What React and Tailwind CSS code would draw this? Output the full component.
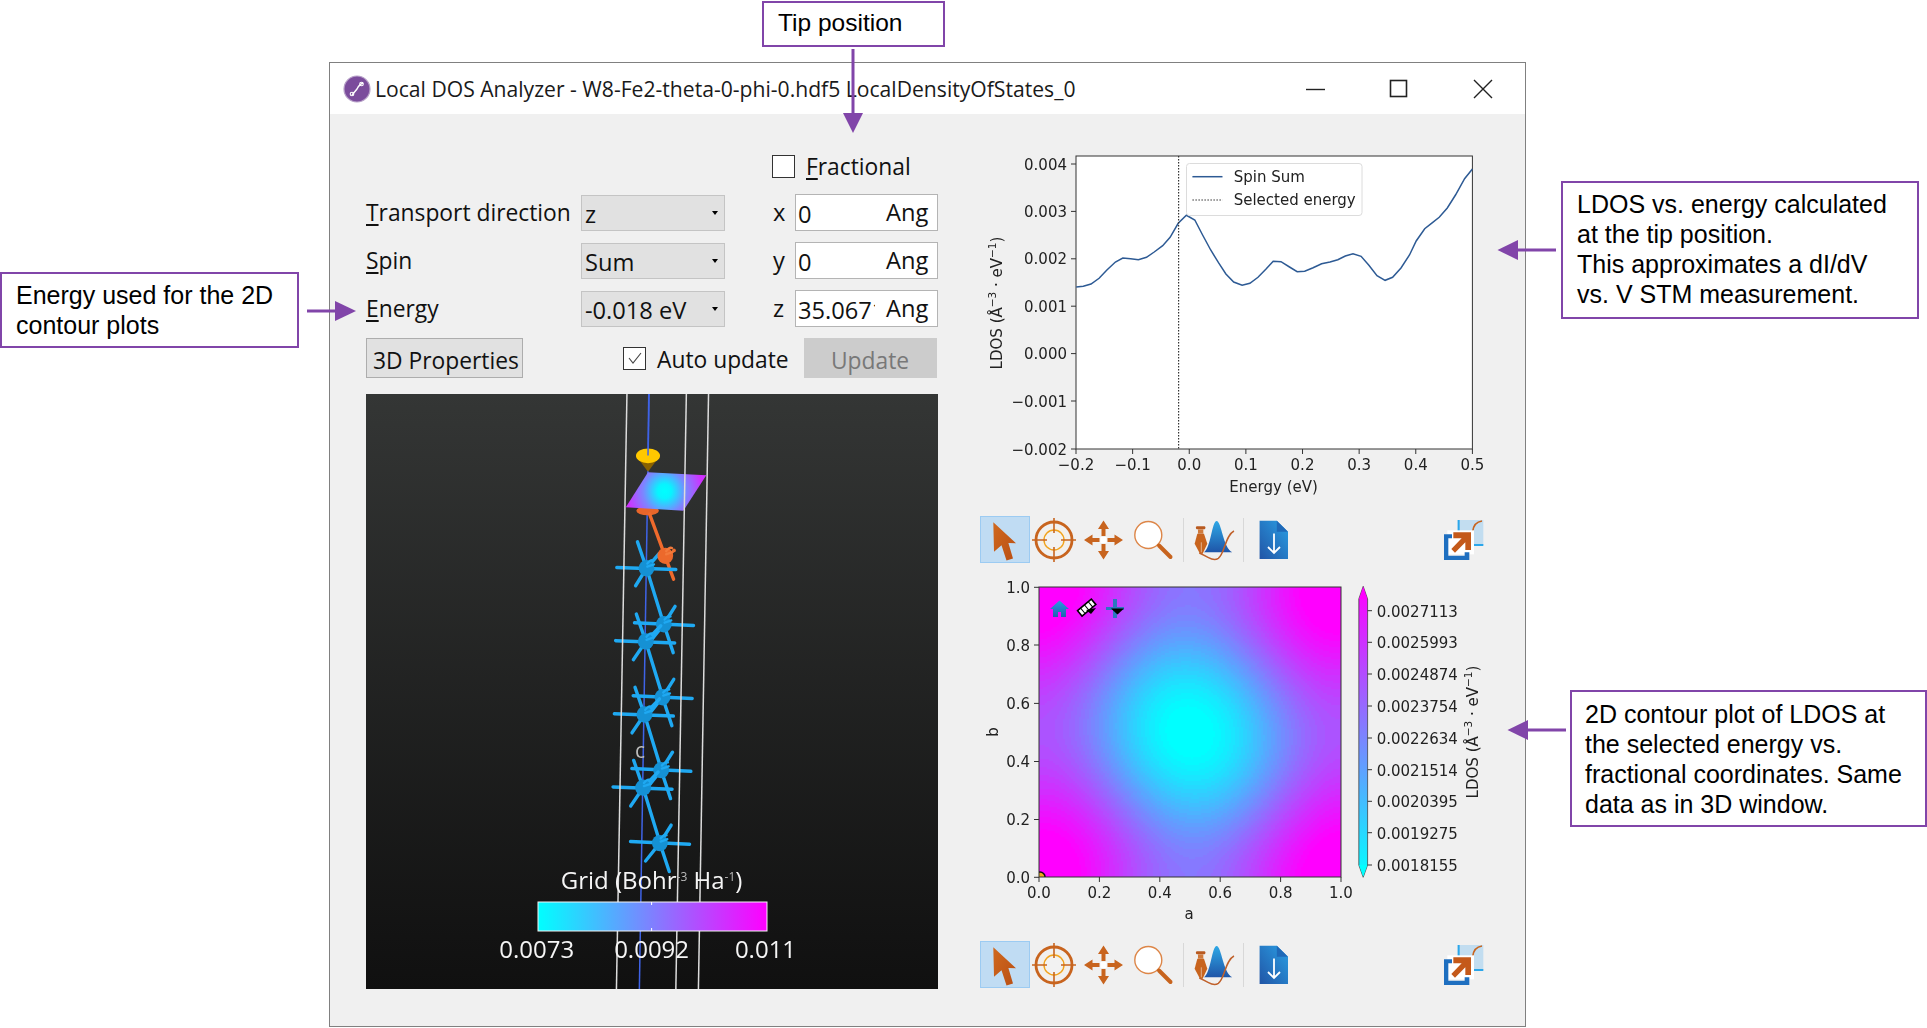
import React, { useMemo } from "react";

const PURPLE = "#8145a9";
const SANS = "[font-family:'Liberation_Sans',Arial,sans-serif]";
const UI = "[font-family:'Open_Sans',sans-serif]";
const PLOT = "[font-family:'DejaVu_Sans',sans-serif]";

function Squeezed({ children, className = "" }) {
  return <span className={"inline-block origin-left scale-x-[.95] translate-y-[2px] whitespace-nowrap " + className}>{children}</span>;
}

function Digits({ children }) {
  return (
    <span className="inline-block origin-left translate-y-[.5px] scale-x-[.985] whitespace-nowrap text-[24px] leading-none text-[#111]">
      {children}
    </span>
  );
}

function Mnemonic({ first, rest }) {
  return (
    <span className="inline-block origin-left translate-y-[1px] scale-x-[.95] whitespace-nowrap text-[24px] leading-none text-[#111]">
      <span className="underline underline-offset-[3px] decoration-[1.5px]">{first}</span>
      {rest}
    </span>
  );
}

function Combo({ value }) {
  return (
    <div className="flex h-[36px] w-[144px] items-center border border-[#c4c4c4] bg-[#e1e1e1] pl-[3px] pr-[6px]">
      <Digits>{value}</Digits>
      <div className="ml-auto h-0 w-0 border-x-[3px] border-t-[4px] border-x-transparent border-t-black" />
    </div>
  );
}

function Field({ value }) {
  return (
    <div className="flex h-[37px] w-[143px] items-center border border-[#b4b4b4] bg-white pl-[2px]">
      <div className="flex h-[35px] w-[77px] items-center overflow-hidden">
        <Digits>{value}</Digits>
      </div>
      <div className="ml-[11px]">
        <Digits>Ang</Digits>
      </div>
    </div>
  );
}

function FormRow({ first, rest, value, axis, field }) {
  return (
    <div className="mb-[11px] flex h-[37px] items-center">
      <div className="w-[215px]">
        <Mnemonic first={first} rest={rest} />
      </div>
      <Combo value={value} />
      <div className="w-[70px] pl-[48px]">
        <Digits>{axis}</Digits>
      </div>
      <Field value={field} />
    </div>
  );
}

function Controls() {
  return (
    <div className={UI}>
      <div className="mb-[16px] mt-[41px] flex h-[23px] items-center pl-[406px]">
        <div className="h-[23px] w-[23px] border-[1.5px] border-[#333] bg-white" />
        <div className="ml-[11px]">
          <Mnemonic first="F" rest="ractional" />
        </div>
      </div>
      <FormRow first="T" rest="ransport direction" value="z" axis="x" field="0" />
      <FormRow first="S" rest="pin" value="Sum" axis="y" field="0" />
      <FormRow first="E" rest="nergy" value="-0.018 eV" axis="z" field="35.0671" />
      <div className="mt-[1px] flex h-[40px] items-center">
        <button className="flex h-[40px] w-[157px] items-center border border-[#adadad] bg-[#e1e1e1] pl-[6px]">
          <Squeezed className="text-[24px] leading-none text-[#111]">3D Properties</Squeezed>
        </button>
        <div className="ml-[100px] flex h-[23px] w-[23px] items-center justify-center border-[1.5px] border-[#333] bg-white">
          <svg width="16" height="14" viewBox="0 0 16 14">
            <path d="M2 7 L6 12 L14 2" fill="none" stroke="#444" strokeWidth="1.1" />
          </svg>
        </div>
        <div className="ml-[11px] w-[147px]">
          <Squeezed className="text-[24px] leading-none text-[#111]">Auto update</Squeezed>
        </div>
        <button className="flex h-[40px] w-[133px] items-center bg-[#cccccc] pl-[27px]">
          <Squeezed className="text-[24px] leading-none text-[#787878]">Update</Squeezed>
        </button>
      </div>
    </div>
  );
}

const BLUE = "#1fa9f2";

function Atom({ cx, cy, fill, glint }) {
  return (
    <g>
      <circle cx={cx} cy={cy} r="21" fill={fill} />
      <path d={`M${cx + 2} ${cy - 12} C${cx + 10} ${cy - 22} ${cx + 14} ${cy - 22} ${cx + 18} ${cy - 20} M${cx + 2} ${cy - 4} L${cx + 20} ${cy - 10}`} fill="none" stroke={glint} strokeWidth="6" strokeLinecap="round" />
    </g>
  );
}

function UpperAtom({ dx, dy }) {
  return (
    <g transform={`translate(${dx} ${dy})`}>
      <g stroke={BLUE} strokeWidth="9" strokeLinecap="round">
        <line x1="730" y1="600" x2="887" y2="607" />
        <line x1="808" y1="604" x2="833" y2="677" />
        <line x1="808" y1="604" x2="838" y2="558" />
        <line x1="808" y1="604" x2="770" y2="650" />
      </g>
      <Atom cx={808} cy={604} fill="#1591d4" glint={BLUE} />
    </g>
  );
}

function LowerAtom({ dx, dy }) {
  return (
    <g transform={`translate(${dx} ${dy})`}>
      <g stroke={BLUE} strokeWidth="9" strokeLinecap="round">
        <line x1="680" y1="646" x2="837" y2="652" />
        <line x1="735" y1="578" x2="760" y2="648" />
        <line x1="760" y1="648" x2="727" y2="695" />
        <line x1="760" y1="648" x2="800" y2="608" />
        <line x1="760" y1="648" x2="805" y2="790" />
      </g>
      <Atom cx={760} cy={648} fill="#1591d4" glint={BLUE} />
    </g>
  );
}

function View3D() {
  return (
    <div className="mt-[16px] h-[595px] w-[572px] bg-linear-to-b from-[#343635] to-[#101010]">
      <svg width="572" height="595" viewBox="0 0 572 595" className="block blur-[.35px]">
        <defs>
          <radialGradient id="plane" gradientUnits="userSpaceOnUse" cx="810" cy="262" r="102">
            <stop offset="0" stopColor="#00ffff" />
            <stop offset="0.18" stopColor="#08f4ff" />
            <stop offset="0.55" stopColor="#7a88ff" />
            <stop offset="1" stopColor="#d030ff" />
          </radialGradient>
          <linearGradient id="bar3d" x1="0" x2="1" y1="0" y2="0">
            <stop offset="0" stopColor="#00ffff" />
            <stop offset="1" stopColor="#ff00ff" />
          </linearGradient>
        </defs>
        <g transform="scale(.376 .389) translate(-16 -12)">
          <line x1="769" y1="12" x2="743" y2="1545" stroke="#3f63e6" strokeWidth="4" />
          <g stroke="#f06a2c" strokeLinecap="round">
            <ellipse cx="765" cy="312" rx="30" ry="12" fill="#e8662a" stroke="none" />
            <line x1="770" y1="320" x2="834" y2="488" strokeWidth="9" />
          </g>
          <g stroke={BLUE} strokeWidth="9" strokeLinecap="round">
            <line x1="683" y1="458" x2="840" y2="463" />
            <line x1="738" y1="392" x2="762" y2="460" />
            <line x1="762" y1="460" x2="733" y2="505" />
            <line x1="762" y1="460" x2="796" y2="422" />
            <line x1="762" y1="460" x2="808" y2="604" />
          </g>
          <Atom cx={812} cy={428} fill="#ec692c" glint="#f27a3c" />
          <circle cx="835" cy="414" r="5" fill="#ee7030" />
          <Atom cx={762} cy={460} fill="#1591d4" glint={BLUE} />
          {[0, 1, 2].map((i) => (
            <g key={i}>
              <UpperAtom dx={-3.5 * i} dy={187.5 * i} />
              <LowerAtom dx={-3.5 * i} dy={188 * i} />
            </g>
          ))}
          <UpperAtom dx={-10.5} dy={562.5} />
          <polygon points="734,171 798,171 766,212" fill="#8a6200" />
          <ellipse cx="766" cy="171" rx="32" ry="19" fill="#ffc800" />
          <line x1="768" y1="12" x2="766" y2="170" stroke="#3f63e6" strokeWidth="4" />
          <polygon points="766,213 921,221 860,312 707,303" fill="url(#plane)" />
          <g stroke="#dcdcdc" strokeWidth="4">
            <line x1="710" y1="12" x2="682" y2="1545" />
            <line x1="868" y1="12" x2="840" y2="1545" />
            <line x1="927" y1="12" x2="900" y2="1545" />
          </g>
        </g>
        <rect x="172" y="508" width="229" height="29" fill="url(#bar3d)" stroke="#f4f4f4" strokeWidth="1" />
        <line x1="285.6" y1="508" x2="285.6" y2="511" stroke="#fff" />
        <line x1="285.6" y1="534" x2="285.6" y2="537" stroke="#fff" />
        <g className={UI} fill="#f5f5f5">
          <text x="269" y="364" className="text-[21px]" fill="#bdbdbd">c</text>
          <text x="285.6" y="495" textAnchor="middle" className="text-[24px]">
            Grid (Bohr<tspan dy="-8" className="text-[12px]" fill="#bbb">-3</tspan>
            <tspan dy="8"> Ha</tspan>
            <tspan dy="-8" className="text-[12px]" fill="#bbb">-1</tspan>
            <tspan dy="8">)</tspan>
          </text>
          <text x="170.8" y="564" textAnchor="middle" className="text-[24px]">0.0073</text>
          <text x="285.6" y="564" textAnchor="middle" className="text-[24px]">0.0092</text>
          <text x="399.5" y="564" textAnchor="middle" className="text-[24px]">0.011</text>
        </g>
      </svg>
    </div>
  );
}

const CURVE = [
  [314,441],[335,439],[358,432],[382,415],[405,390],[430,366],[452,354],[475,356],[498,359],[522,352],
  [545,336],[570,317],[592,292],[616,250],[640,226],[665,240],[688,285],[712,330],[735,368],[757,402],
  [780,426],[805,436],[828,430],[852,412],[875,388],[897,364],[920,365],[945,381],[968,395],[990,394],
  [1015,383],[1040,371],[1065,366],[1088,359],[1110,348],[1133,341],[1157,349],[1180,376],[1204,407],[1228,421],
  [1250,412],[1275,384],[1300,345],[1320,303],[1345,266],[1365,250],[1388,232],[1412,204],[1436,165],[1463,116],[1486,87],
];

function LdosLabel({ x, y }) {
  return (
    <text transform={`rotate(-90 ${x} ${y})`} x={x} y={y} textAnchor="middle" className="text-[15px]">
      LDOS (Å<tspan dy="-6" className="text-[10.5px]">−3</tspan>
      <tspan dy="6"> · eV</tspan>
      <tspan dy="-6" className="text-[10.5px]">−1</tspan>
      <tspan dy="6">)</tspan>
    </text>
  );
}

function LineChart() {
  const points = CURVE.map(([x, y]) => `${(970 + x / 2.958).toFixed(1)},${(140 + y / 3).toFixed(1)}`).join(" ");
  const yTicks = [
    ["0.004", 164], ["0.003", 211.4], ["0.002", 258.8], ["0.001", 306.2],
    ["0.000", 353.6], ["−0.001", 401], ["−0.002", 449],
  ];
  const xTicks = ["−0.2", "−0.1", "0.0", "0.1", "0.2", "0.3", "0.4", "0.5"];
  return (
    <svg width="530" height="370" viewBox="970 140 530 370" className={"block blur-[.4px] " + PLOT}>
      <rect x="1076" y="156" width="396.4" height="293" fill="#fff" stroke="#333" strokeWidth="1" />
      <polyline points={points} fill="none" stroke="#2d5a94" strokeWidth="1.5" />
      <line x1="1178.6" y1="156" x2="1178.6" y2="449" stroke="#333" strokeWidth="1.2" strokeDasharray="1.5 1.5" />
      <rect x="1186.5" y="163.5" width="175.5" height="52" rx="3" fill="#fff" fillOpacity=".9" stroke="#dcdcdc" />
      <line x1="1192.4" y1="176.7" x2="1222.5" y2="176.7" stroke="#2d5a94" strokeWidth="1.5" />
      <line x1="1192.4" y1="200" x2="1222.5" y2="200" stroke="#333" strokeWidth="1.2" strokeDasharray="1.5 1.5" />
      <g fill="#222" className="text-[15px]">
        <text x="1233.7" y="182">Spin Sum</text>
        <text x="1233.7" y="205">Selected energy</text>
        {yTicks.map(([t, y]) => (
          <g key={t}>
            <line x1="1071" y1={y} x2="1076" y2={y} stroke="#333" />
            <text x="1067" y={y + 5.5} textAnchor="end">{t}</text>
          </g>
        ))}
        {xTicks.map((t, i) => {
          const x = 1076 + i * 56.63;
          return (
            <g key={t}>
              <line x1={x} y1="449" x2={x} y2="454" stroke="#333" />
              <text x={x} y="470" textAnchor="middle">{t}</text>
            </g>
          );
        })}
        <text x="1273.6" y="492" textAnchor="middle">Energy (eV)</text>
        <LdosLabel x={1002} y={303} />
      </g>
    </svg>
  );
}

function useBands() {
  return useMemo(() => {
    const W = 302;
    const H = 290;
    const step = 2;
    const levels = 40;
    const out = [];
    const band = (px, py) => {
      const x = px / W - 0.5;
      const y = py / H - 0.5;
      const cx = 1 - Math.cos(2 * Math.PI * x);
      const cy = 1 - Math.cos(2 * Math.PI * y);
      const cross = Math.sin(2 * Math.PI * x) * Math.sin(2 * Math.PI * y);
      const h = 0.345 * cx + 0.275 * cy - 0.04 * cx * cy - 0.03 * cross;
      const t = Math.min(1, Math.max(0, (h - 0.03) / 0.97));
      return Math.round(t * levels);
    };
    for (let py = 0; py < H; py += step) {
      let start = 0;
      let cur = band(1, py + 1);
      for (let px = step; px <= W; px += step) {
        const b = px === W ? -1 : band(px + 1, py + 1);
        if (b !== cur) {
          const t = cur / levels;
          out.push({
            x: start,
            y: py,
            w: px - start,
            c: `rgb(${Math.round(255 * t)},${Math.round(255 * (1 - t))},255)`,
          });
          start = px;
          cur = b;
        }
      }
    }
    return out;
  }, []);
}

function ContourChart() {
  const bands = useBands();
  const yTicks = [["1.0", 588.3], ["0.8", 646], ["0.6", 704.4], ["0.4", 762.5], ["0.2", 820.5], ["0.0", 878.3]];
  const xTicks = [["0.0", 1039], ["0.2", 1099.4], ["0.4", 1159.8], ["0.6", 1220.2], ["0.8", 1280.6], ["1.0", 1341]];
  const cTicks = [
    ["0.0027113", 611.7], ["0.0025993", 643.3], ["0.0024874", 675], ["0.0023754", 707],
    ["0.0022634", 739], ["0.0021514", 770.7], ["0.0020395", 802.3], ["0.0019275", 833.7], ["0.0018155", 866],
  ];
  return (
    <svg width="530" height="370" viewBox="970 570 530 370" className={"block blur-[.4px] " + PLOT}>
      <defs>
        <linearGradient id="cbar" x1="0" x2="0" y1="0" y2="1">
          <stop offset="0" stopColor="#ff00ff" />
          <stop offset="1" stopColor="#00ffff" />
        </linearGradient>
        <linearGradient id="homeGrad" x1="0" x2="0" y1="0" y2="1">
          <stop offset="0" stopColor="#2a9be0" />
          <stop offset="1" stopColor="#2060b0" />
        </linearGradient>
        <clipPath id="plotClip">
          <rect x="1039" y="588" width="302" height="290" />
        </clipPath>
      </defs>
      <g transform="translate(1039 588)" shapeRendering="crispEdges">
        {bands.map((b, i) => (
          <rect key={i} x={b.x} y={b.y} width={b.w} height="2" fill={b.c} />
        ))}
      </g>
      <circle cx="1040" cy="878" r="5" fill="#f0a818" stroke="#111" strokeWidth="1.6" clipPath="url(#plotClip)" />
      <rect x="1039" y="588" width="302" height="290" fill="none" stroke="#333" strokeWidth="1" />
      <polygon points="1050,610 1059.5,601.5 1069,610 1066,610 1066,618 1061,618 1061,613 1058,613 1058,618 1053,618 1053,610" fill="url(#homeGrad)" />
      <g transform="rotate(-40 1087 609)">
        <rect x="1078" y="605" width="18" height="7" fill="#fff" stroke="#000" strokeWidth="1.6" />
        <line x1="1082" y1="605" x2="1082" y2="612" stroke="#000" strokeWidth="1" />
        <line x1="1087" y1="605" x2="1087" y2="612" stroke="#000" strokeWidth="1" />
        <line x1="1092" y1="605" x2="1092" y2="612" stroke="#000" strokeWidth="1" />
      </g>
      <polygon points="1086,611 1096,609 1091,615" fill="#000" />
      <rect x="1106" y="608" width="18" height="3" fill="#2a78c0" />
      <rect x="1113" y="600" width="4" height="19" fill="#2a78c0" />
      <polygon points="1111,609.5 1124,609.5 1117.5,615.5" fill="#000" />
      <polygon points="1363.2,587.3 1367.6,600 1367.6,866 1363.2,878.3 1358.8,866 1358.8,600" fill="url(#cbar)" stroke="#333" strokeWidth=".7" />
      <polygon points="1363.2,587.8 1367.3,600 1359.1,600" fill="#ff00ff" />
      <polygon points="1363.2,877.8 1367.3,866 1359.1,866" fill="#00ffff" />
      <g fill="#222" className="text-[15px]">
        {yTicks.map(([t, y]) => (
          <g key={t}>
            <line x1="1034" y1={y} x2="1039" y2={y} stroke="#333" />
            <text x="1030" y={y + 5.5} textAnchor="end">{t}</text>
          </g>
        ))}
        {xTicks.map(([t, x]) => (
          <g key={t}>
            <line x1={x} y1="878" x2={x} y2="883" stroke="#333" />
            <text x={x} y="899" textAnchor="middle">{t}</text>
          </g>
        ))}
        {cTicks.map(([t, y]) => (
          <g key={t}>
            <line x1="1367.6" y1={y} x2="1372" y2={y} stroke="#333" />
            <text x="1376.7" y={y + 6}>{t}</text>
          </g>
        ))}
        <text x="1189" y="920" textAnchor="middle">a</text>
        <text transform="rotate(-90 998 733)" x="998" y="733" textAnchor="middle">b</text>
        <LdosLabel x={1478} y={733} />
      </g>
    </svg>
  );
}

function Toolbar({ id }) {
  return (
    <div className="flex h-[47px] items-center pl-[10px] pr-[16px]">
      <div className="h-[47px] w-[50px] border border-[#9ccbf2] bg-[#c0dcf3]">
        <svg width="48" height="45" viewBox="1 1 48 45" className="block">
          <defs>
            <linearGradient id={id + "o"} x1="0" x2="1" y1="0" y2="1">
              <stop offset="0" stopColor="#d0691f" />
              <stop offset="1" stopColor="#b94f14" />
            </linearGradient>
          </defs>
          <polygon points="13.3,6.3 36,27.3 28.4,27 33,42.5 26.5,44.5 21.5,29.3 14,35.7" fill={`url(#${id}o)`} />
        </svg>
      </div>
      <svg width="48" height="47" viewBox="0 0 48 47" className="block">
        <circle cx="24" cy="24" r="13" fill="#f6efe6" />
        <circle cx="24" cy="24" r="18" fill="none" stroke="#c8641e" strokeWidth="2.8" />
        <circle cx="24" cy="24" r="10" fill="#f2f2f2" stroke="#f0a31e" strokeWidth="1.4" />
        <path d="M2 24H17M31 24H46M24 2V17M24 31V46" stroke="#c8641e" strokeWidth="1.6" />
      </svg>
      <svg width="49" height="47" viewBox="0 0 49 47" className="ml-[1px] block">
        <rect x="21.5" y="21" width="6" height="6" fill="#fff" />
        <path d="M24.5 4.5L30 13H26.5V20H22.5V13H19Z M24.5 43.5L30 35H26.5V28H22.5V35H19Z M5 24L13.5 18.5V22H20.5V26H13.5V29.5Z M44 24L35.5 18.5V22H28.5V26H35.5V29.5Z" fill="#c8641e" />
      </svg>
      <svg width="48" height="47" viewBox="0 0 48 47" className="block">
        <circle cx="20.3" cy="19" r="13.5" fill="#fff" stroke="#dd8648" strokeWidth="1.4" />
        <line x1="31" y1="29.5" x2="42.5" y2="41" stroke="#c8641e" strokeWidth="4" strokeLinecap="round" />
      </svg>
      <div className="ml-[7px] h-[44px] w-px bg-[#d8d8d8]" />
      <svg width="42" height="47" viewBox="0 0 42 47" className="ml-[9px] block">
        <defs>
          <linearGradient id={id + "b"} x1="0" x2="0" y1="0" y2="1">
            <stop offset="0" stopColor="#2ea8e6" />
            <stop offset="1" stopColor="#1f55a8" />
          </linearGradient>
        </defs>
        <g transform="translate(-213 -11) scale(.3333)">
          <path d="M672 142 C692 130 696 48 710 48 C724 48 730 130 757 142Z" fill={`url(#${id}b)`} />
          <rect x="648" y="64" width="28" height="9" rx="3" fill="#b85a20" />
          <rect x="654" y="73" width="16" height="13" fill="#d07a3c" />
          <path d="M652 86H672L682 116L668 146H660L644 116Z" fill="#c8641e" />
          <line x1="664" y1="112" x2="664" y2="142" stroke="#f0d8c4" strokeWidth="2" />
          <path d="M658 144 C675 150 698 172 715 160 C735 145 735 92 762 78" fill="none" stroke="#c0602a" strokeWidth="4.5" />
        </g>
      </svg>
      <div className="ml-[8px] h-[44px] w-px bg-[#d8d8d8]" />
      <svg width="32" height="47" viewBox="0 0 32 47" className="ml-[14px] block">
        <defs>
          <linearGradient id={id + "f"} x1="1" x2="0" y1="0" y2="1">
            <stop offset="0" stopColor="#2a9fe4" />
            <stop offset="1" stopColor="#2155a6" />
          </linearGradient>
        </defs>
        <path d="M1.6 4.7H18.8L30 15.7V43H1.6Z" fill={`url(#${id}f)`} />
        <path d="M18.8 4.7L30 15.7H18.8Z" fill="#1f69b8" />
        <path d="M16 17.5V37M10 31L16 37L22 31" fill="none" stroke="#fff" strokeWidth="1.8" />
      </svg>
      <svg width="42" height="47" viewBox="0 0 42 47" className="ml-auto block">
        <g transform="translate(-22 -11) scale(.3333)">
          <rect x="113" y="45" width="77" height="75" fill="#c2ddf0" />
          <path d="M116 45V120H190" fill="none" stroke="#2ba6ea" strokeWidth="6" />
          <path d="M158 80C160 62 170 50 186 48" fill="none" stroke="#c8641e" strokeWidth="5" />
          <rect x="82" y="76" width="80" height="72" fill="#fff" />
          <path d="M72 88V165H148V142H134V152H85V100H96V88Z" fill="#1e6fc0" />
          <polygon points="100,82 153,82 153,135 136,135 136,112 105,143 94,132 125,100 100,100" fill="#c4591a" />
        </g>
      </svg>
    </div>
  );
}

function Window() {
  return (
    <div className="ml-[329px] h-[965px] w-[1197px] border border-[#808080] bg-[#f0f0f0]">
      <div className={"flex h-[51px] items-center bg-white pl-[13px] " + UI}>
        <svg width="28" height="28" viewBox="0 0 28 28" className="block">
          <circle cx="14" cy="14" r="13" fill="#7b4c9c" stroke="#b7a0c8" strokeWidth="1.2" />
          <path d="M9 20 L14 14 C15 12 17 9 20 8" fill="none" stroke="#fff" strokeWidth="1.4" />
          <circle cx="18.5" cy="9" r="1.8" fill="none" stroke="#fff" strokeWidth="1.1" />
          <circle cx="9" cy="19" r="1.8" fill="none" stroke="#fff" strokeWidth="1.1" />
        </svg>
        <div className="ml-[4px] w-[931px]">
          <span className="inline-block origin-left translate-y-[1px] scale-x-[.96] whitespace-nowrap text-[22px] leading-none text-[#1a1a1a]">
            Local DOS Analyzer - W8-Fe2-theta-0-phi-0.hdf5 LocalDensityOfStates_0
          </span>
        </div>
        <svg width="20" height="20" viewBox="0 0 20 20" className="block">
          <line x1="0" y1="10.5" x2="19" y2="10.5" stroke="#222" strokeWidth="1.4" />
        </svg>
        <svg width="20" height="20" viewBox="0 0 20 20" className="ml-[63px] block">
          <rect x="1.5" y="1.5" width="16" height="16" fill="none" stroke="#222" strokeWidth="1.6" />
        </svg>
        <svg width="20" height="20" viewBox="0 0 20 20" className="ml-[64px] block">
          <path d="M1 1L19 19M19 1L1 19" stroke="#222" strokeWidth="1.4" />
        </svg>
      </div>
      <div className="flex">
        <div className="ml-[36px] w-[572px]">
          <Controls />
          <View3D />
        </div>
        <div className="ml-[32px] w-[530px] pt-[26px]">
          <LineChart />
          <div className="mt-[6px]">
            <Toolbar id="t1" />
          </div>
          <div className="mt-[6px]">
            <ContourChart />
          </div>
          <div className="mt-[2px]">
            <Toolbar id="t2" />
          </div>
        </div>
      </div>
    </div>
  );
}

function Callout({ className, children }) {
  return (
    <div className={"absolute border-2 border-[#8145a9] bg-white leading-[30px] text-black " + SANS + " " + className}>
      {children}
    </div>
  );
}

export default function App() {
  return (
    <div className="relative h-[1028px] w-[1927px] overflow-hidden bg-white pt-[62px]">
      <Window />
      <Callout className="left-[762px] top-[1px] h-[46px] w-[183px] pl-[14px] pt-[5px] text-[24.5px]">Tip position</Callout>
      <Callout className="left-0 top-[272px] h-[76px] w-[299px] pl-[14px] pt-[6px] text-[25px]">
        Energy used for the 2D
        <br />
        contour plots
      </Callout>
      <Callout className="left-[1561px] top-[181px] h-[138px] w-[358px] pl-[14px] pt-[6px] text-[25px]">
        LDOS vs. energy calculated
        <br />
        at the tip position.
        <br />
        This approximates a dI/dV
        <br />
        vs. V STM measurement.
      </Callout>
      <Callout className="left-[1570px] top-[690px] h-[137px] w-[357px] pl-[13px] pt-[7px] text-[25px]">
        2D contour plot of LDOS at
        <br />
        the selected energy vs.
        <br />
        fractional coordinates. Same
        <br />
        data as in 3D window.
      </Callout>
      <svg width="24" height="86" viewBox="0 0 24 86" className="absolute left-[841px] top-[48px]">
        <line x1="12" y1="1" x2="12" y2="66" stroke={PURPLE} strokeWidth="3" />
        <polygon points="2,65 22,65 12,85" fill={PURPLE} />
      </svg>
      <svg width="52" height="24" viewBox="0 0 52 24" className="absolute left-[306px] top-[299px]">
        <line x1="1" y1="12" x2="30" y2="12" stroke={PURPLE} strokeWidth="3" />
        <polygon points="29,2 29,22 50,12" fill={PURPLE} />
      </svg>
      <svg width="60" height="24" viewBox="0 0 60 24" className="absolute left-[1497px] top-[238px]">
        <line x1="59" y1="12" x2="20" y2="12" stroke={PURPLE} strokeWidth="3" />
        <polygon points="21,2 21,22 0.5,12" fill={PURPLE} />
      </svg>
      <svg width="60" height="24" viewBox="0 0 60 24" className="absolute left-[1507px] top-[718px]">
        <line x1="59" y1="12" x2="20" y2="12" stroke={PURPLE} strokeWidth="3" />
        <polygon points="21,2 21,22 0.5,12" fill={PURPLE} />
      </svg>
    </div>
  );
}
